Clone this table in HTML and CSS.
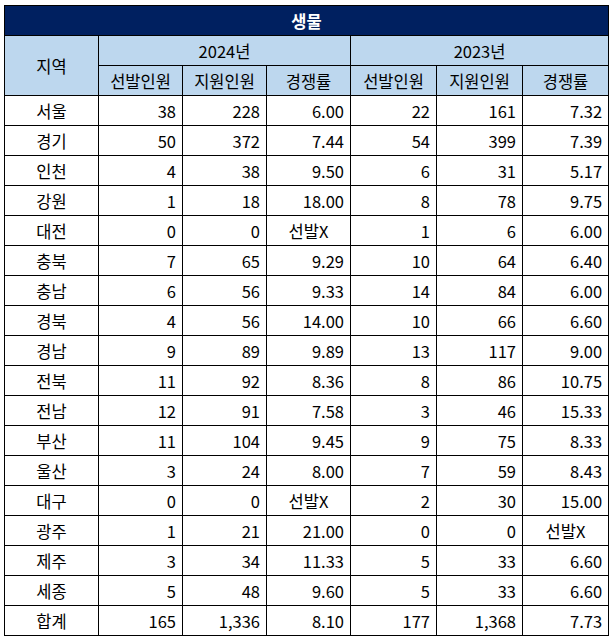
FILE: index.html
```html
<!DOCTYPE html>
<html lang="ko">
<head>
<meta charset="utf-8">
<link rel="stylesheet" href="styles.css">
</head>
<body>
<table class="sheet">
  <colgroup>
    <col class="c-region">
    <col class="c-a"><col class="c-a"><col class="c-a">
    <col class="c-b"><col class="c-b"><col class="c-b">
  </colgroup>
  <thead>
    <tr class="title"><th colspan="7">생물</th></tr>
    <tr class="head"><th rowspan="2">지역</th><th colspan="3">2024년</th><th colspan="3">2023년</th></tr>
    <tr class="head"><th>선발인원</th><th>지원인원</th><th>경쟁률</th><th>선발인원</th><th>지원인원</th><th>경쟁률</th></tr>
  </thead>
  <tbody>
    <tr><th>서울</th><td>38</td><td>228</td><td>6.00</td><td>22</td><td>161</td><td>7.32</td></tr>
    <tr><th>경기</th><td>50</td><td>372</td><td>7.44</td><td>54</td><td>399</td><td>7.39</td></tr>
    <tr><th>인천</th><td>4</td><td>38</td><td>9.50</td><td>6</td><td>31</td><td>5.17</td></tr>
    <tr><th>강원</th><td>1</td><td>18</td><td>18.00</td><td>8</td><td>78</td><td>9.75</td></tr>
    <tr><th>대전</th><td>0</td><td>0</td><td class="x">선발X</td><td>1</td><td>6</td><td>6.00</td></tr>
    <tr><th>충북</th><td>7</td><td>65</td><td>9.29</td><td>10</td><td>64</td><td>6.40</td></tr>
    <tr><th>충남</th><td>6</td><td>56</td><td>9.33</td><td>14</td><td>84</td><td>6.00</td></tr>
    <tr><th>경북</th><td>4</td><td>56</td><td>14.00</td><td>10</td><td>66</td><td>6.60</td></tr>
    <tr><th>경남</th><td>9</td><td>89</td><td>9.89</td><td>13</td><td>117</td><td>9.00</td></tr>
    <tr><th>전북</th><td>11</td><td>92</td><td>8.36</td><td>8</td><td>86</td><td>10.75</td></tr>
    <tr><th>전남</th><td>12</td><td>91</td><td>7.58</td><td>3</td><td>46</td><td>15.33</td></tr>
    <tr><th>부산</th><td>11</td><td>104</td><td>9.45</td><td>9</td><td>75</td><td>8.33</td></tr>
    <tr><th>울산</th><td>3</td><td>24</td><td>8.00</td><td>7</td><td>59</td><td>8.43</td></tr>
    <tr><th>대구</th><td>0</td><td>0</td><td class="x">선발X</td><td>2</td><td>30</td><td>15.00</td></tr>
    <tr><th>광주</th><td>1</td><td>21</td><td>21.00</td><td>0</td><td>0</td><td class="x">선발X</td></tr>
    <tr><th>제주</th><td>3</td><td>34</td><td>11.33</td><td>5</td><td>33</td><td>6.60</td></tr>
    <tr><th>세종</th><td>5</td><td>48</td><td>9.60</td><td>5</td><td>33</td><td>6.60</td></tr>
    <tr><th>합계</th><td>165</td><td>1,336</td><td>8.10</td><td>177</td><td>1,368</td><td>7.73</td></tr>
  </tbody>
</table>
</body>
</html>
```

FILE: styles.css
```css
html, body {
  margin: 0;
  padding: 0;
  background: #ffffff;
}
body {
  padding: 5px 0 0 4px;
  font-family: "Noto Sans CJK KR", "Noto Sans", sans-serif;
  font-size: 16.5px;
  color: #000000;
}
.sheet {
  border-collapse: collapse;
  table-layout: fixed;
  width: 604px;
}
.c-region { width: 94px; }
.c-a { width: 84px; }
.c-b { width: 86px; }
.sheet th, .sheet td {
  border: 1px solid #000000;
  height: 29px;
  padding: 0 6px;
  line-height: 18px;
  font-weight: normal;
  white-space: nowrap;
  overflow: hidden;
}
.sheet td {
  text-align: right;
}
.sheet th {
  text-align: center;
}
.sheet td.x {
  text-align: center;
}
.title th {
  background: #002060;
  color: #ffffff;
  font-weight: bold;
}
.head th {
  background: #bdd7ee;
}
```
